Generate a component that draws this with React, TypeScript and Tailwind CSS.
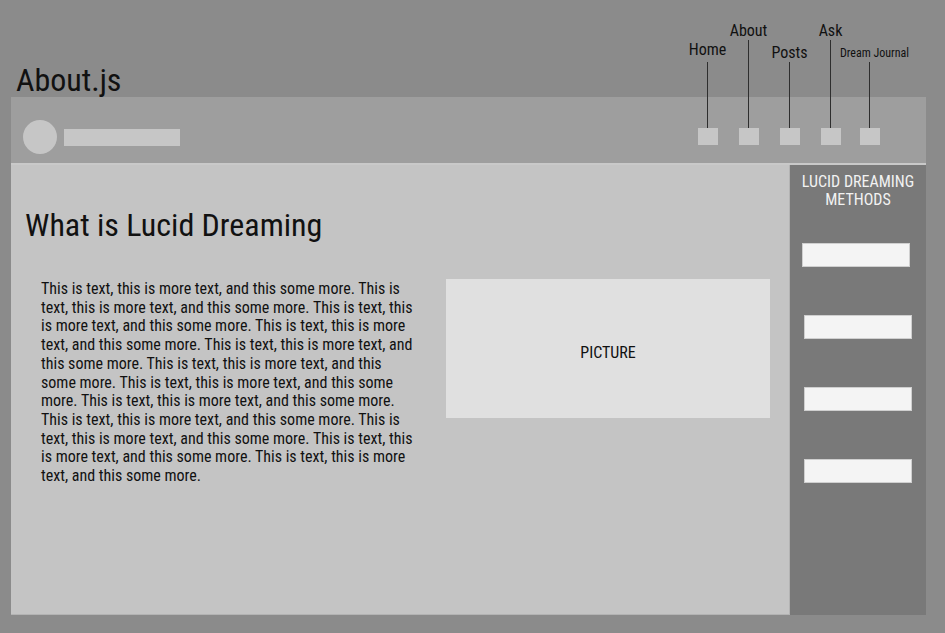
import React from "react";

const navItems = [
  { label: "Home", line: 66, gap: 4, small: false },
  { label: "About", line: 88, gap: 1, small: false },
  { label: "Posts", line: 66, gap: 1, small: false },
  { label: "Ask", line: 88, gap: 1, small: false },
  { label: "Dream Journal", line: 66, gap: 3, small: true },
];

const sentence = "This is text, this is more text, and this some more. ";
const bodyText = sentence.repeat(12).trim();

export default function App() {
  return (
    <div className="h-[633px] w-[945px] overflow-hidden bg-[#8b8b8b] font-['Roboto_Condensed','Roboto',sans-serif] font-stretch-condensed text-[#111]">
      <div className="relative ml-[11px] w-[915px]">
        {/* page title */}
        <div className="flex h-[97px] items-end pb-[1px] pl-[5px]">
          <h1 className="text-[32px] leading-none">About.js</h1>
        </div>

        {/* header bar */}
        <div className="flex h-[66px] items-center gap-[7px] bg-[#9e9e9e] pl-[12px] pt-[14px]">
          <span className="h-[34px] w-[34px] rounded-full bg-[#c6c6c6]" />
          <span className="h-[17px] w-[116px] bg-[#c6c6c6]" />
        </div>

        {/* nav annotations over the header */}
        <nav className="absolute bottom-[18px] left-[676px] flex items-end">
          {navItems.map((item) => (
            <div
              key={item.label}
              className={
                item.small
                  ? "flex w-[37px] flex-col items-center"
                  : "flex w-[41px] flex-col items-center"
              }
            >
              <span
                className={
                  item.small
                    ? "translate-x-[5px] whitespace-nowrap text-[12px] leading-none"
                    : "whitespace-nowrap text-[16px] leading-none"
                }
              >
                {item.label}
              </span>
              <span
                className="w-px bg-[#2e2e2e]"
                style={{ height: item.line, marginTop: item.gap }}
              />
              <span className="h-[17px] w-[20px] bg-[#c6c6c6]" />
            </div>
          ))}
        </nav>
      </div>

      <div className="ml-[11px] h-[2px] w-[915px] bg-[#c9c9c9]" />

      <div className="ml-[11px] flex h-[450px] w-[915px]">
        {/* main content */}
        <main className="flex-1 border-b border-r border-[#b3b3b3] bg-[#c4c4c4] pl-[14px] pr-[19px] pt-[44px]">
          <h2 className="text-[32px] leading-none">What is Lucid Dreaming</h2>
          <div className="mt-[39px] flex items-start">
            <p className="ml-[16px] w-[378px] text-[16px] leading-[18.7px]">{bodyText}</p>
            <div className="ml-auto mt-[-1px] flex h-[139px] w-[324px] items-center justify-center bg-[#e0e0e0] pt-[8px] text-[16px]">
              PICTURE
            </div>
          </div>
        </main>

        {/* sidebar */}
        <aside className="flex w-[136px] flex-col items-center bg-[#797979] pt-[8px]">
          <h3 className="text-center text-[16px] uppercase leading-[18px] text-[#f2f2f2]">
            Lucid Dreaming
            <br />
            Methods
          </h3>
          <div className="mt-[34px] flex flex-col gap-[48px]">
            {[0, 1, 2, 3].map((i) => (
              <span
                key={i}
                className={
                  i === 0
                    ? "-ml-[2px] h-[24px] w-[108px] border border-[#cfcfcf] bg-[#f4f4f4]"
                    : "h-[24px] w-[108px] border border-[#cfcfcf] bg-[#f4f4f4]"
                }
              />
            ))}
          </div>
        </aside>
      </div>
    </div>
  );
}
